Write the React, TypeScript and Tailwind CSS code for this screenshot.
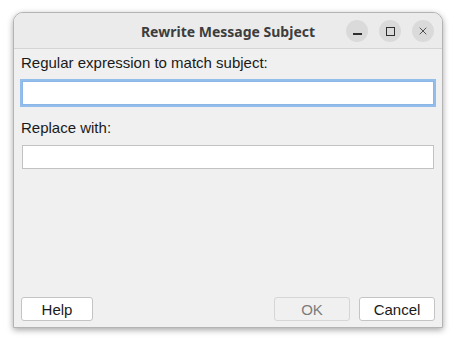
import { X } from 'lucide-react';

function TitleButton({ children }: { children: React.ReactNode }) {
  return (
    <button
      type="button"
      className="w-[22px] h-[22px] rounded-full bg-[#dadada] flex items-center justify-center text-[#2e2e2e]"
    >
      {children}
    </button>
  );
}

function DialogButton({
  label,
  disabled,
  className = '',
}: {
  label: string;
  disabled?: boolean;
  className?: string;
}) {
  return (
    <button
      type="button"
      disabled={disabled}
      className={`h-[24px] rounded-[3px] border text-[15px] leading-none ${
        disabled
          ? 'border-[#d6d6d6] bg-[#f0f0f0] text-[#7c7c7c]'
          : 'border-[#c4c4c4] bg-white text-[#1a1a1a]'
      } ${className}`}
    >
      {label}
    </button>
  );
}

export default function App() {
  return (
    <div
      className="w-[456px] h-[344px] bg-white pt-[12px] pl-[13px]"
      style={{ fontFamily: '"Liberation Sans", Arial, sans-serif' }}
    >
      <div className="w-[430px] h-[316px] flex flex-col rounded-t-[10px] border border-[#b4b4b4] bg-[#f0f0f0] shadow-[0_2px_6px_rgba(0,0,0,0.35)] overflow-hidden">
        {/* Title bar */}
        <header className="h-[36px] shrink-0 grid grid-cols-[1fr_auto_1fr] items-center bg-[#ebebeb] border-b border-[#d4d4d4]">
          <div />
          <span className="font-['Noto_Sans',sans-serif] font-bold text-[14px] text-[#3d3d3d] pt-[1px]">
            Rewrite Message Subject
          </span>
          <div className="flex items-center justify-end gap-[11px] pr-[8px] pt-[1px]">
            <TitleButton>
              <span className="block w-[9px] h-[1.5px] bg-[#2e2e2e] translate-y-[3px]" />
            </TitleButton>
            <TitleButton>
              <span className="block w-[9px] h-[9px] border-[1.5px] border-[#2e2e2e]" />
            </TitleButton>
            <TitleButton>
              <X size={12} strokeWidth={1.6} />
            </TitleButton>
          </div>
        </header>

        {/* Body */}
        <div className="flex-1 flex flex-col px-[7px] pt-[5px] pb-[6px]">
          <label className="text-[15px] leading-[17px] text-[#1a1a1a]">
            Regular expression to match subject:
          </label>
          <input
            type="text"
            className="mt-[10px] mx-[1px] h-[24px] bg-white border border-[#8ab6e8] ring-2 ring-[#93bdeb] outline-none"
          />
          <label className="mt-[14px] text-[15px] leading-[17px] text-[#1a1a1a]">
            Replace with:
          </label>
          <input
            type="text"
            className="mt-[9px] mx-[1px] h-[24px] bg-white border border-[#c2c2c2] outline-none"
          />

          <div className="flex-1" />

          <div className="flex items-center">
            <DialogButton label="Help" className="w-[72px]" />
            <div className="flex-1" />
            <DialogButton label="OK" disabled className="w-[76px]" />
            <DialogButton label="Cancel" className="w-[76px] ml-[9px]" />
          </div>
        </div>
      </div>
    </div>
  );
}
